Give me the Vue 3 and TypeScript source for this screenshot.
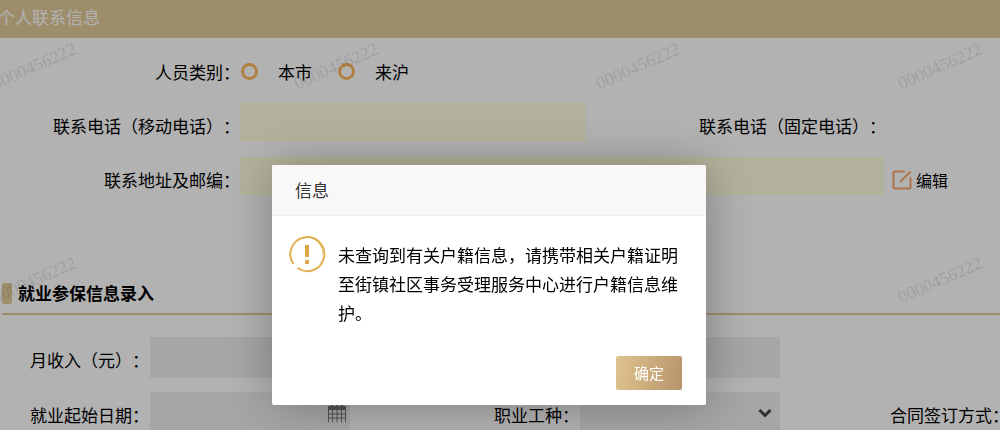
<script setup lang="ts">
import { ref } from 'vue'

const category = ref('')
const mobile = ref('')
const address = ref('')
const income = ref('')
const startDate = ref('')
const job = ref('')
const dialogOpen = ref(true)
const watermark = '0000456222'
</script>

<template>
  <main class="page">
    <h1 class="banner">个人联系信息</h1>

    <form class="contact" @submit.prevent>
      <div class="row row-category" role="radiogroup" aria-labelledby="category-label">
        <span id="category-label" class="label">人员类别：</span>
        <div class="radios">
          <label class="radio"><input v-model="category" type="radio" name="category" value="local" />本市</label>
          <label class="radio"><input v-model="category" type="radio" name="category" value="visitor" />来沪</label>
        </div>
      </div>
      <div class="row row-phone">
        <label class="label" for="mobile">联系电话（移动电话）：</label>
        <input id="mobile" v-model="mobile" class="field required" type="tel" />
        <span class="label">联系电话（固定电话）：</span>
      </div>
      <div class="row row-address">
        <label class="label" for="address">联系地址及邮编：</label>
        <input id="address" v-model="address" class="field required" type="text" />
        <button class="edit" type="button">
          <svg width="20" height="20" viewBox="0 0 20 20" fill="none" stroke="currentColor" stroke-width="2" stroke-linecap="round" stroke-linejoin="round" aria-hidden="true">
            <path d="M12 1.5H2.5a1 1 0 0 0-1 1v15a1 1 0 0 0 1 1h15a1 1 0 0 0 1-1V8" />
            <path d="M8.5 11.5L18 2" />
          </svg>
          编辑
        </button>
      </div>
    </form>

    <h2 class="section">就业参保信息录入</h2>

    <form class="job" @submit.prevent>
      <label class="label" for="income">月收入（元）：</label>
      <input id="income" v-model="income" class="field wide" type="text" />
      <label class="label first" for="start">就业起始日期：</label>
      <div class="control">
        <input id="start" v-model="startDate" class="field" type="text" />
        <svg class="calendar" width="20" height="20" viewBox="0 0 20 20" fill="none" stroke="currentColor" aria-hidden="true">
          <path d="M1 3h18v4H1z" fill="currentColor" stroke="none" />
          <path d="M1.5 4v15M5.5 7v12M10 7v12M14.5 7v12M18.5 4v15M1 11h18M1 15h18" />
          <path d="M5 1v4M10 1v4M15 1v4" stroke-width="2" />
        </svg>
      </div>
      <label class="label" for="kind">职业工种：</label>
      <div class="control">
        <select id="kind" v-model="job" class="field"><option value=""></option></select>
        <svg class="chevron" width="14" height="10" viewBox="0 0 14 10" fill="none" stroke="currentColor" stroke-width="3" aria-hidden="true">
          <path d="M1.5 2L7 7.5L12.5 2" />
        </svg>
      </div>
      <span class="label">合同签订方式：</span>
    </form>

    <div class="watermarks" aria-hidden="true">
      <span v-for="n in 8" :key="n">{{ watermark }}</span>
    </div>

    <div v-if="dialogOpen" class="shade">
      <section class="dialog" role="alertdialog" aria-modal="true" aria-labelledby="dialog-title" aria-describedby="dialog-text">
        <h2 id="dialog-title" class="dialog-title">信息</h2>
        <div class="dialog-body">
          <svg class="warn" width="38" height="38" viewBox="0 0 38 38" fill="none" aria-hidden="true">
            <path d="M5.5 29A17 17 0 1 1 9.5 33" stroke="#e3b050" stroke-width="2" />
            <path d="M15 2.500A17 17 0 0 1 30 31Q41 15 28 5Q22 1 15 2.500z" fill="#dda845" />
            <path d="M17 10h4v12h-4zM17 25h4v4h-4z" fill="#dda845" />
          </svg>
          <p id="dialog-text">未查询到有关户籍信息，请携带相关户籍证明至街镇社区事务受理服务中心进行户籍信息维护。</p>
        </div>
        <div class="dialog-actions">
          <button class="confirm" type="button" @click="dialogOpen = false">确定</button>
        </div>
      </section>
    </div>
  </main>
</template>

<style>
body {
  margin: 0;
}
</style>

<style scoped>
.page {
  position: relative;
  height: 100vh;
  overflow: hidden;
  background: #fff;
  color: #000;
  font: 17px/24px "Noto Sans CJK SC", sans-serif;
  text-spacing-trim: space-all;
}
.page * {
  box-sizing: border-box;
}
h1,
h2,
p {
  margin: 0;
}
button,
input,
select {
  font: inherit;
  color: inherit;
  margin: 0;
}
.banner {
  height: 38px;
  padding-bottom: 4px;
  background: #e3cb99;
  color: #fff;
  font-size: 17px;
  font-weight: 400;
  line-height: 34px;
  text-indent: -2px;
}
.row {
  display: grid;
  align-items: center;
}
.row-category {
  grid-template-columns: 24% 1fr;
  height: 57px;
  padding-top: 10px;
}
.row-phone {
  grid-template-columns: 24% 34.6% 30% 1fr;
  height: 54px;
}
.row-address {
  grid-template-columns: 24% 64.4% auto;
  height: 54px;
}
.label {
  white-space: nowrap;
  text-align: right;
}
.row-phone .label,
.row-address .label {
  padding-top: 8px;
}
.radios {
  display: flex;
  gap: 26px;
  padding-left: 1px;
}
.radio {
  display: flex;
  align-items: center;
  gap: 20px;
}
.radio input {
  appearance: none;
  width: 17px;
  height: 17px;
  border: 3px solid #fcb95c;
  border-radius: 50%;
}
.radio input:checked {
  background: #fcb95c;
}
.field {
  display: block;
  appearance: none;
  width: 100%;
  height: 41px;
  padding: 0 12px;
  border: 0;
  border-radius: 0;
  background: #eee;
}
.field.required {
  height: 38px;
  background: #ffffe0;
}
.edit {
  display: flex;
  align-items: center;
  justify-self: start;
  gap: 4px;
  margin-left: 8px;
  padding: 8px 0 0;
  border: 0;
  background: none;
  font-size: 16px;
}
.edit svg {
  color: #f9a66c;
}
.section {
  display: flex;
  align-items: center;
  gap: 6px;
  margin: 76px 0 0 2px;
  padding-bottom: 6px;
  border-bottom: 2px solid #e3cb99;
  font-size: 17px;
  font-weight: 700;
  line-height: 28px;
}
.section::before {
  content: "";
  width: 10px;
  height: 21px;
  border-radius: 2px;
  background: #e3cb99;
}
.job {
  display: grid;
  grid-template-columns: 15% 20% 23% 20% 23%;
  row-gap: 14px;
  align-items: center;
  padding-top: 22px;
}
.job .label {
  padding: 4px 1px 0 0;
}
.wide {
  grid-column: 2 / 5;
}
.first {
  grid-column: 1;
}
.control {
  position: relative;
}
.calendar,
.chevron {
  position: absolute;
  pointer-events: none;
}
.calendar {
  top: 11px;
  right: 3px;
  color: #777;
}
.chevron {
  top: 16px;
  right: 8px;
  color: #444;
}
.watermarks {
  position: absolute;
  top: -41px;
  left: -117px;
  display: grid;
  grid-template-columns: repeat(4, 302px);
  grid-auto-rows: 214px;
  place-items: center;
  pointer-events: none;
  color: rgba(0, 0, 0, 0.12);
  font: 18px/20px "Liberation Serif", serif;
}
.watermarks span {
  transform: rotate(-24deg);
}
.shade {
  position: fixed;
  inset: 0;
  padding: 165px 29.4% 0 27.2%;
  background: rgba(0, 0, 0, 0.3);
}
.dialog {
  border-radius: 2px;
  background: #fff;
  box-shadow: 1px 1px 50px rgba(0, 0, 0, 0.3);
}
.dialog-title {
  padding: 0 23px;
  border-bottom: 1px solid #eee;
  border-radius: 2px 2px 0 0;
  background: #f8f8f8;
  color: #333;
  font-size: 17px;
  font-weight: 400;
  line-height: 50px;
}
.dialog-body {
  display: flex;
  align-items: flex-start;
  gap: 12px;
  padding: 19px 26px 0 16px;
}
.warn {
  flex: none;
}
.dialog-body p {
  flex: 1;
  padding-top: 5px;
  line-height: 29px;
}
.dialog-actions {
  display: flex;
  justify-content: flex-end;
  padding: 29px 24px 15px;
}
.confirm {
  width: 66px;
  height: 34px;
  padding: 0;
  border: 0;
  border-radius: 2px;
  background: linear-gradient(100deg, #dfc48f, #b8936a);
  color: #fff;
  font-size: 15px;
}
</style>
